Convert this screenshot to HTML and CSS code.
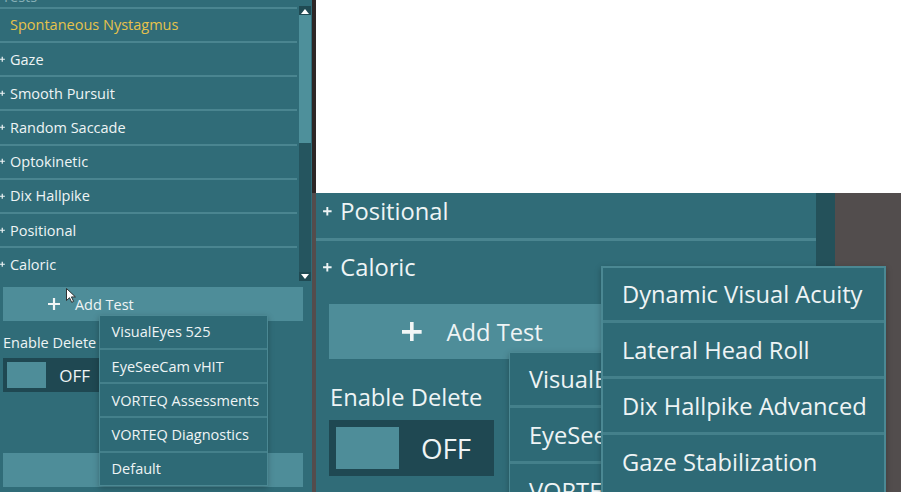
FILE: index.html
```html
<!DOCTYPE html>
<html lang="en">
<head>
  <meta charset="UTF-8">
  <meta name="viewport" content="width=device-width, initial-scale=1.0">
  <title>Test Protocol</title>
  <link rel="stylesheet" href="styles.css">
</head>
<body>
  <!-- normal size panel -->
  <div class="left-panel">
    <div class="tests">
      <div class="test-list">
        <div class="list-title"><span>Tests</span></div>
        <div class="test-row current"><span class="row-text">Spontaneous Nystagmus</span></div>
        <div class="test-row"><svg class="plus-icon" viewBox="0 0 10 10"><path d="M5 1v8M1 5h8"/></svg><span class="row-text">Gaze</span></div>
        <div class="test-row"><svg class="plus-icon" viewBox="0 0 10 10"><path d="M5 1v8M1 5h8"/></svg><span class="row-text">Smooth Pursuit</span></div>
        <div class="test-row"><svg class="plus-icon" viewBox="0 0 10 10"><path d="M5 1v8M1 5h8"/></svg><span class="row-text">Random Saccade</span></div>
        <div class="test-row"><svg class="plus-icon" viewBox="0 0 10 10"><path d="M5 1v8M1 5h8"/></svg><span class="row-text">Optokinetic</span></div>
        <div class="test-row"><svg class="plus-icon" viewBox="0 0 10 10"><path d="M5 1v8M1 5h8"/></svg><span class="row-text">Dix Hallpike</span></div>
        <div class="test-row"><svg class="plus-icon" viewBox="0 0 10 10"><path d="M5 1v8M1 5h8"/></svg><span class="row-text">Positional</span></div>
        <div class="test-row"><svg class="plus-icon" viewBox="0 0 10 10"><path d="M5 1v8M1 5h8"/></svg><span class="row-text">Caloric</span></div>
      </div>
      <div class="scrollbar">
        <div class="scroll-arrow up"><svg viewBox="0 0 10 6"><path d="M1 6L5 1l4 5z"/></svg></div>
        <div class="scroll-thumb"></div>
        <div class="scroll-track"></div>
        <div class="scroll-arrow down"><svg viewBox="0 0 10 6"><path d="M1 0l4 5 4-5z"/></svg></div>
      </div>
    </div>

    <div class="add-test">
      <svg class="add-plus" viewBox="0 0 12 12"><path d="M6 0v12M0 6h12"/></svg>
      <span>Add Test</span>
    </div>
    <div class="delete-label">Enable Delete</div>
    <div class="toggle">
      <span class="toggle-knob"></span>
      <span class="toggle-text">OFF</span>
    </div>
    <div class="bottom-button"></div>

    <div class="dropdown device-menu">
      <div class="menu-item">VisualEyes 525</div>
      <div class="menu-item">EyeSeeCam vHIT</div>
      <div class="menu-item">VORTEQ Assessments</div>
      <div class="menu-item">VORTEQ Diagnostics</div>
      <div class="menu-item">Default</div>
    </div>

    <svg class="cursor" viewBox="0 0 10 15"><path d="M0.5 0.5v12l3-2.8 2.2 4.6 1.9-0.9-2.2-4.5h4z"/></svg>
  </div>

  <div class="divider"></div>

  <!-- magnified view -->
  <div class="right-side">
    <div class="blank"></div>
    <div class="zoom-view">
      <div class="zoom-panel">
        <div class="test-row zoom-row"><svg class="plus-icon" viewBox="0 0 10 10"><path d="M5 1v8M1 5h8"/></svg><span class="row-text">Positional</span></div>
        <div class="test-row zoom-row"><svg class="plus-icon" viewBox="0 0 10 10"><path d="M5 1v8M1 5h8"/></svg><span class="row-text">Caloric</span></div>
        <div class="add-test">
          <svg class="add-plus" viewBox="0 0 12 12"><path d="M6 0v12M0 6h12"/></svg>
          <span>Add Test</span>
        </div>
        <div class="delete-label">Enable Delete</div>
        <div class="toggle">
          <span class="toggle-knob"></span>
          <span class="toggle-text">OFF</span>
        </div>
      </div>
      <div class="zoom-track"></div>
      <div class="zoom-bg"></div>

      <div class="dropdown zoom-menu">
        <div class="menu-item">VisualEyes 525</div>
        <div class="menu-item">EyeSeeCam vHIT</div>
        <div class="menu-item">VORTEQ Assessments</div>
      </div>
      <div class="dropdown sub-menu">
        <div class="menu-item">Dynamic Visual Acuity</div>
        <div class="menu-item">Lateral Head Roll</div>
        <div class="menu-item">Dix Hallpike Advanced</div>
        <div class="menu-item">Gaze Stabilization</div>
      </div>
    </div>
  </div>
</body>
</html>
```

FILE: styles.css
```css
/* sizes are in em so the magnified view can reuse them */
body {
  margin: 0;
  height: 492px;
  display: flex;
  overflow: hidden;
  font-family: "Open Sans", "Noto Sans", sans-serif;
  color: #eef4f5;
  background-color: white;
}

.left-panel {
  position: relative;
  width: 312px;
  font-size: 14.5px;
  background-color: #306c78;
  display: flex;
  flex-direction: column;
}

.tests {
  display: flex;
}

.test-list {
  width: 297px;
}

.list-title {
  height: 0.462em;
  overflow: hidden;
}

.list-title span {
  display: block;
  margin-top: -0.72em;
  padding-left: 2px;
  line-height: 1em;
  color: #86afb6;
}

.test-row {
  box-sizing: border-box;
  height: 2.362em;
  border-top: 0.138em solid #4a8590;
  display: flex;
  align-items: center;
}

.test-row.current .row-text {
  margin-left: 0.69em;
  color: #e6c24b;
}

.plus-icon {
  width: 0.45em;
  height: 0.45em;
  margin-left: -0.08em;
  fill: none;
  stroke: #eef4f5;
  stroke-width: 1.8;
}

.row-text {
  margin-left: 0.32em;
  white-space: nowrap;
}

.scrollbar {
  width: 12px;
  margin-left: 2px;
  margin-top: 6px;
  height: 275px;
  display: flex;
  flex-direction: column;
}

.scroll-arrow {
  height: 9px;
  background-color: #1f4a53;
  display: flex;
  align-items: center;
  justify-content: center;
}

.scroll-arrow svg {
  width: 10px;
  height: 6px;
  fill: white;
}

.scroll-thumb {
  height: 128px;
  background-color: #4e909b;
}

.scroll-track {
  flex: 1;
  background-color: #25555f;
}

.add-test {
  box-sizing: border-box;
  width: 20.69em;
  height: 2.345em;
  margin-top: 0.414em;
  margin-left: 0.207em;
  padding-left: 3.1em;
  background-color: #4e8d99;
  display: flex;
  align-items: center;
}

.add-plus {
  width: 0.83em;
  height: 0.83em;
  margin-right: 1.03em;
  fill: none;
  stroke: #f2f6f6;
  stroke-width: 2.2;
}

.delete-label {
  margin-top: 0.8em;
  padding-left: 0.207em;
  line-height: 1.38em;
  white-space: nowrap;
}

.toggle {
  box-sizing: border-box;
  width: 6.97em;
  height: 2.345em;
  margin-top: 0.38em;
  margin-left: 0.207em;
  padding: 0.276em;
  background-color: #1f4852;
  display: flex;
  align-items: center;
}

.toggle-knob {
  width: 2.69em;
  height: 1.79em;
  background-color: #4e8d99;
}

.toggle-text {
  margin-left: 0.78em;
  font-size: 1.17em;
}

.bottom-button {
  width: 300px;
  height: 34px;
  margin: auto 0 5px 3px;
  background-color: #4e8d99;
}

.dropdown {
  position: absolute;
  box-sizing: border-box;
  border: 0.069em solid #4b8893;
  background-color: #2e6a76;
  box-shadow: 0 2px 6px rgba(0, 0, 0, 0.25);
}

.menu-item {
  box-sizing: border-box;
  height: 2.362em;
  padding-left: 0.8em;
  border-top: 0.138em solid #44808b;
  display: flex;
  align-items: center;
  white-space: nowrap;
  overflow: hidden;
}

.menu-item:first-child {
  height: 2.2em;
  border-top: none;
}

.device-menu {
  left: 99px;
  top: 315px;
  width: 169px;
}

.cursor {
  position: absolute;
  left: 66px;
  top: 288px;
  width: 10px;
  height: 15px;
  fill: white;
  stroke: #222;
  stroke-width: 0.9;
}

.divider {
  width: 4px;
  background: linear-gradient(#2d2626 0, #2d2626 193px, #544c4c 193px);
}

.right-side {
  flex: 1;
  display: flex;
  flex-direction: column;
}

.blank {
  height: 193px;
  background-color: white;
}

.zoom-view {
  position: relative;
  flex: 1;
  display: flex;
  overflow: hidden;
  font-size: 23.7px;
}

.zoom-panel {
  width: 500px;
  background-color: #306c78;
}

.zoom-row {
  padding-left: 8px;
}

.zoom-row:first-child {
  margin-top: -11px;
}

.zoom-panel .add-test,
.zoom-panel .delete-label,
.zoom-panel .toggle {
  margin-left: 13px;
}

.zoom-panel .delete-label {
  margin-top: 22px;
  padding-left: 1px;
}

.zoom-panel .toggle {
  margin-top: 6px;
}

.zoom-track {
  width: 19px;
  background-color: #24515a;
}

.zoom-bg {
  flex: 1;
  background-color: #524d4d;
}

.zoom-menu {
  left: 193px;
  top: 159px;
  width: 276px;
}

.sub-menu {
  left: 285px;
  top: 73px;
  width: 285px;
  height: 240px;
  border-width: 2px;
}
```
